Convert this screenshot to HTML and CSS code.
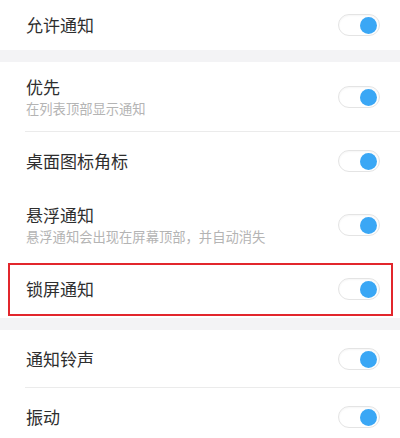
FILE: index.html
```html
<!DOCTYPE html>
<html lang="zh-CN">
<head>
    <meta charset="UTF-8">
    <meta name="viewport" content="width=device-width, initial-scale=1.0">
    <title>通知管理</title>
    <link rel="stylesheet" href="styles.css">
</head>
<body>
    <div class="grupo">
        <div class="fila primera">
            <div class="texto"><p class="titulo">允许通知</p></div>
            <span class="interruptor"><span class="bola"></span></span>
        </div>
    </div>

    <div class="grupo">
        <div class="fila doble linea">
            <div class="texto">
                <p class="titulo">优先</p>
                <p class="sub">在列表顶部显示通知</p>
            </div>
            <span class="interruptor"><span class="bola"></span></span>
        </div>
        <div class="fila simple">
            <div class="texto"><p class="titulo">桌面图标角标</p></div>
            <span class="interruptor"><span class="bola"></span></span>
        </div>
        <div class="fila doble">
            <div class="texto">
                <p class="titulo">悬浮通知</p>
                <p class="sub">悬浮通知会出现在屏幕顶部，并自动消失</p>
            </div>
            <span class="interruptor"><span class="bola"></span></span>
        </div>
        <!-- fila marcada con el recuadro rojo -->
        <div class="fila simple marcada">
            <div class="texto"><p class="titulo">锁屏通知</p></div>
            <span class="interruptor"><span class="bola"></span></span>
        </div>
    </div>

    <div class="grupo">
        <div class="fila simple linea">
            <div class="texto"><p class="titulo">通知铃声</p></div>
            <span class="interruptor"><span class="bola"></span></span>
        </div>
        <div class="fila simple">
            <div class="texto"><p class="titulo">振动</p></div>
            <span class="interruptor"><span class="bola"></span></span>
        </div>
    </div>
</body>
</html>
```

FILE: styles.css
```css
body {
    margin: 0;
    padding: 0;
    background-color: #f3f3f5;
    font-family: "Noto Sans CJK SC", "Noto Sans", sans-serif;
    color: #333;
    overflow: hidden;
}

.grupo {
    background-color: #fff;
    margin-bottom: 12px;
}

.fila {
    display: flex;
    align-items: center;
    justify-content: space-between;
    padding: 0 20px 0 26px;
    position: relative;
    box-sizing: border-box;
}
.primera {
    height: 50px;
}
.simple {
    height: 58px;
}
.doble {
    height: 70px;
}
/* separador que empieza a la altura del texto */
.linea::before {
    content: "";
    position: absolute;
    left: 25px;
    right: 0;
    bottom: 0;
    height: 1px;
    background-color: #ebebeb;
}

.texto p {
    margin: 0;
}
.titulo {
    font-size: 17px;
    line-height: 22px;
    color: #2e2e2e;
}
.sub {
    font-size: 13.3px;
    line-height: 18px;
    color: #b4b4b4;
    margin-top: 2px !important;
}

.interruptor {
    width: 42px;
    height: 22px;
    box-sizing: border-box;
    border: 1px solid #e4e4e4;
    border-radius: 11px;
    background-color: #fff;
    box-shadow: inset 0 1px 2px rgba(0, 0, 0, 0.04);
    display: flex;
    align-items: center;
    justify-content: flex-end;
    padding-right: 2px;
}
.bola {
    width: 17px;
    height: 17px;
    border-radius: 50%;
    background-color: #3aa7f5;
}

/* recuadro rojo encima de la fila */
.marcada::after {
    content: "";
    position: absolute;
    top: 3px;
    bottom: 2px;
    left: 8px;
    right: 7px;
    border: 2px solid #e2262c;
}
```
